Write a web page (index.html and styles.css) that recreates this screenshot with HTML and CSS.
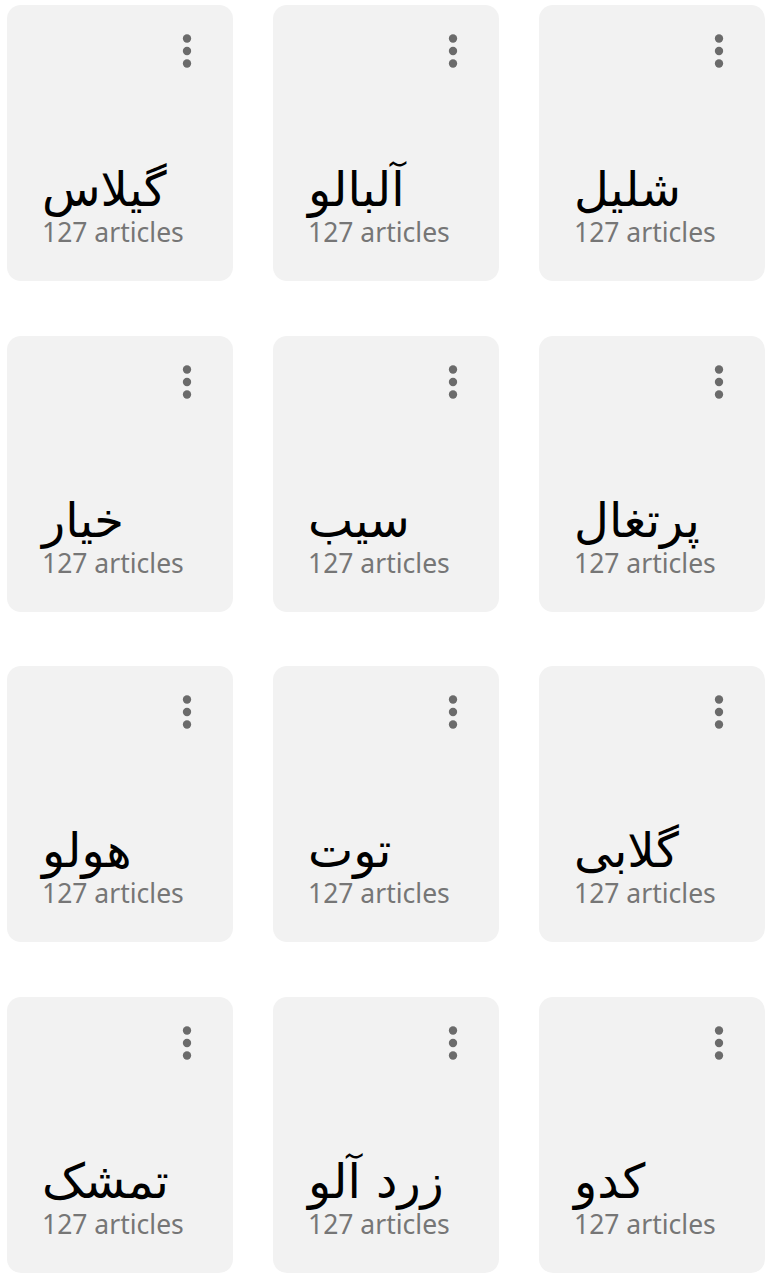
FILE: index.html
```html
<!DOCTYPE html>
<html lang="en">
<head>
<meta charset="utf-8">
<title>Categories</title>
<link rel="stylesheet" href="styles.css">
</head>
<body>
<main class="grid">
  <div class="card"><span class="more"><svg viewBox="0 0 24 24"><circle cx="12" cy="6" r="2"/><circle cx="12" cy="12" r="2"/><circle cx="12" cy="18" r="2"/></svg></span><div class="title">گیلاس</div><div class="sub">127 articles</div></div>
  <div class="card"><span class="more"><svg viewBox="0 0 24 24"><circle cx="12" cy="6" r="2"/><circle cx="12" cy="12" r="2"/><circle cx="12" cy="18" r="2"/></svg></span><div class="title">آلبالو</div><div class="sub">127 articles</div></div>
  <div class="card"><span class="more"><svg viewBox="0 0 24 24"><circle cx="12" cy="6" r="2"/><circle cx="12" cy="12" r="2"/><circle cx="12" cy="18" r="2"/></svg></span><div class="title">شلیل</div><div class="sub">127 articles</div></div>
  <div class="card"><span class="more"><svg viewBox="0 0 24 24"><circle cx="12" cy="6" r="2"/><circle cx="12" cy="12" r="2"/><circle cx="12" cy="18" r="2"/></svg></span><div class="title">خیار</div><div class="sub">127 articles</div></div>
  <div class="card"><span class="more"><svg viewBox="0 0 24 24"><circle cx="12" cy="6" r="2"/><circle cx="12" cy="12" r="2"/><circle cx="12" cy="18" r="2"/></svg></span><div class="title">سیب</div><div class="sub">127 articles</div></div>
  <div class="card"><span class="more"><svg viewBox="0 0 24 24"><circle cx="12" cy="6" r="2"/><circle cx="12" cy="12" r="2"/><circle cx="12" cy="18" r="2"/></svg></span><div class="title">پرتغال</div><div class="sub">127 articles</div></div>
  <div class="card"><span class="more"><svg viewBox="0 0 24 24"><circle cx="12" cy="6" r="2"/><circle cx="12" cy="12" r="2"/><circle cx="12" cy="18" r="2"/></svg></span><div class="title">هولو</div><div class="sub">127 articles</div></div>
  <div class="card"><span class="more"><svg viewBox="0 0 24 24"><circle cx="12" cy="6" r="2"/><circle cx="12" cy="12" r="2"/><circle cx="12" cy="18" r="2"/></svg></span><div class="title">توت</div><div class="sub">127 articles</div></div>
  <div class="card"><span class="more"><svg viewBox="0 0 24 24"><circle cx="12" cy="6" r="2"/><circle cx="12" cy="12" r="2"/><circle cx="12" cy="18" r="2"/></svg></span><div class="title">گلابی</div><div class="sub">127 articles</div></div>
  <div class="card"><span class="more"><svg viewBox="0 0 24 24"><circle cx="12" cy="6" r="2"/><circle cx="12" cy="12" r="2"/><circle cx="12" cy="18" r="2"/></svg></span><div class="title">تمشک</div><div class="sub">127 articles</div></div>
  <div class="card"><span class="more"><svg viewBox="0 0 24 24"><circle cx="12" cy="6" r="2"/><circle cx="12" cy="12" r="2"/><circle cx="12" cy="18" r="2"/></svg></span><div class="title">زرد آلو</div><div class="sub">127 articles</div></div>
  <div class="card"><span class="more"><svg viewBox="0 0 24 24"><circle cx="12" cy="6" r="2"/><circle cx="12" cy="12" r="2"/><circle cx="12" cy="18" r="2"/></svg></span><div class="title">کدو</div><div class="sub">127 articles</div></div>
</main>
</body>
</html>
```

FILE: styles.css
```css
html, body {
  margin: 0;
  padding: 0;
  background: #ffffff;
}

.grid {
  display: grid;
  grid-template-columns: repeat(3, 226px);
  grid-auto-rows: 276px;
  column-gap: 40px;
  row-gap: 54.7px;
  padding: 5px 0 0 7px;
}

.card {
  position: relative;
  background: #f2f2f2;
  border-radius: 14px;
  display: flex;
  flex-direction: column;
  justify-content: flex-end;
  padding: 0 10px 34px 35px;
}

.more {
  position: absolute;
  top: 21px;
  right: 21px;
  width: 50px;
  height: 50px;
}

.more svg {
  display: block;
  width: 50px;
  height: 50px;
  fill: #6b6b6b;
}

.title {
  font-family: "DejaVu Sans", sans-serif;
  font-size: 48px;
  line-height: 38px;
  margin-bottom: 9px;
  color: #000000;
  direction: ltr;
  text-align: left;
  unicode-bidi: plaintext;
  white-space: nowrap;
}

.sub {
  font-family: "Noto Sans", sans-serif;
  font-size: 26.5px;
  line-height: 30px;
  color: #767676;
}
```
